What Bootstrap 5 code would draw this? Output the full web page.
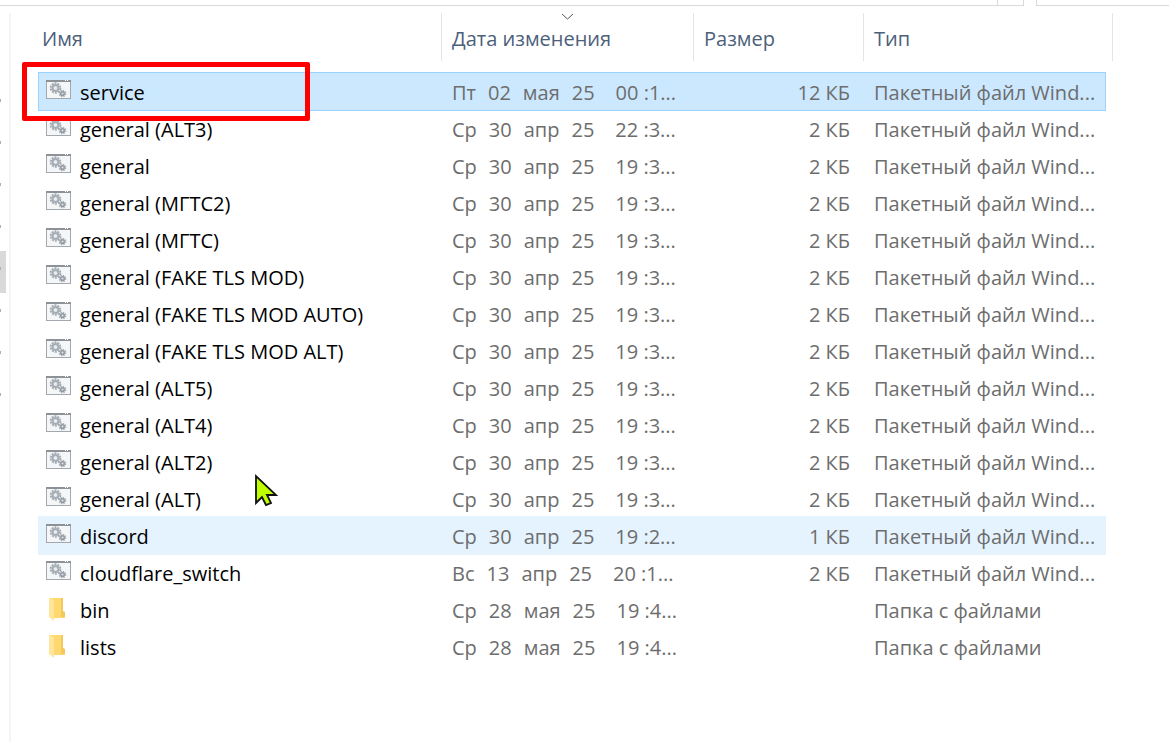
<!DOCTYPE html>
<html lang="ru">
<head>
<meta charset="utf-8">
<meta name="viewport" content="width=device-width, initial-scale=1">
<title>Проводник</title>
<link href="https://cdn.jsdelivr.net/npm/bootstrap@5.3.0/dist/css/bootstrap.min.css" rel="stylesheet">
<script src="https://cdn.jsdelivr.net/npm/bootstrap@5.3.0/dist/js/bootstrap.bundle.min.js"></script>
<style>
body{font-family:"Open Sans","Noto Sans",sans-serif;font-size:20px;line-height:28px;color:#000;background:#fff}
.topbar{height:6px;gap:12px;margin-bottom:7px}
.topbar div{border-bottom:1px solid #d9d9d9}
.address{border-right:1px solid #d9d9d9}
.refresh{width:26px;margin-left:-12px;border-right:1px solid #d9d9d9}
.search{width:133px;border-left:1px solid #d9d9d9}
.tree{width:11px;padding-top:70px;border-right:2px solid #f5f5f5}
.tree li{width:6px;height:42px;padding-bottom:8px}
.tree li::before{content:"";width:1px;height:3px;background:#b0b0b0}
.tree .current{background:#d9d9d9}
.files{padding:0 64px 0 28px}
.filelist{table-layout:fixed;border-collapse:separate;border-spacing:0}
.filelist th,.filelist td{padding:0 0 0 10px;white-space:nowrap}
.filelist th{position:relative;height:60px;padding-bottom:9px;font-weight:400;vertical-align:middle}
.filelist th::after{content:"";position:absolute;top:0;right:0;width:1px;height:48px;background:#e5e5e5}
.filelist th:last-child::after{right:-8px}
.filelist th:first-child{padding-left:3px}
.filelist td:first-child{padding-left:7px}
.filelist .sizecol{padding-right:14px}
.filelist td{height:37px;padding-top:2px;color:#6d6d6d}
.filelist .fname{color:#000}
.sorter{border:0;padding:0;background:none;color:#4c607a}
.sortmark{position:absolute;top:0;left:50%;margin-left:-7px}
.c-date{width:252px}.c-size{width:170px}.c-type{width:241px}
.chosen{position:relative;background:#cce8ff;box-shadow:0 0 0 1px #99d1ff}
.hovered{background:#e5f3ff;box-shadow:0 0 0 1px #e5f3ff}
.stamp{gap:12px}
.stamp .clock{margin-left:9px}
.highlight{position:absolute;z-index:2;left:-17px;top:-11px;width:288px;height:59px;border:5px solid #f00;border-radius:2px;pointer-events:none}
.pointer{position:absolute;left:254px;top:473px;z-index:3}
</style>
</head>
<body>
<svg class="d-none" aria-hidden="true">
<symbol id="bat" viewBox="0 1 26 26">
<rect x=".5" y="1.5" width="24" height="18" fill="#f5f6f7" stroke="#a3a8ae"/>
<path d="M0 2h25" stroke="#8d9298" stroke-width="2"/><path d="M19 1.5h1m1 0h1" stroke="#fff"/>
<g fill="none" stroke="#a5adb5">
<circle cx="9.500" cy="9" r="4.800" stroke-width="2" stroke-dasharray="2 1"/>
<circle cx="9.500" cy="9" r="3" stroke-width="2" fill="#d5dbe0"/>
<circle cx="16.500" cy="14.500" r="3.100" stroke-width="1.500" stroke-dasharray="1.500 .9"/>
<circle cx="16.500" cy="14.500" r="1.800" stroke="#8f979f" stroke-width="1.500" fill="#e4e8eb"/>
</g>
<circle cx="9.500" cy="9" r="1.500" fill="#eceff1"/>
</symbol>
<symbol id="folder" viewBox="0 1 26 26">
<path d="M4 1h13v13l2 1v6H8z" fill="#ffd970"/>
<path d="M15 1h2v13l2 1v5h-4z" fill="#f3c95d"/>
<path d="M3 1l5 2v21l-5-4z" fill="#ffe69b"/>
</symbol>
</svg>
<div class="d-flex flex-column min-vh-100 position-relative">
<header class="topbar d-flex">
<div class="address flex-grow-1"></div><div class="refresh"></div><div class="search"></div>
</header>
<div class="d-flex flex-grow-1">
<ul class="tree list-unstyled flex-shrink-0 mb-0">
<li class="d-flex align-items-center"></li><li class="d-flex align-items-center"></li><li class="d-flex align-items-center"></li><li class="d-flex align-items-center"></li><li class="d-flex align-items-center current"></li><li class="d-flex align-items-center"></li><li class="d-flex align-items-center"></li><li class="d-flex align-items-center"></li>
</ul>
<main class="files flex-grow-1">
<table class="filelist w-100">
<colgroup><col><col class="c-date"><col class="c-size"><col class="c-type"></colgroup>
<thead><tr>
<th scope="col"><button class="sorter" type="button">Имя</button></th>
<th scope="col" aria-sort="descending"><svg class="sortmark" width="13" height="8" viewBox="0 0 13 8" fill="none" stroke="#555"><path d="M1 1l5.500 5L12 1"/></svg><button class="sorter" type="button">Дата изменения</button></th>
<th scope="col"><button class="sorter" type="button">Размер</button></th>
<th scope="col"><button class="sorter" type="button">Тип</button></th>
</tr></thead>
<tbody id="rows"></tbody>
</table>
</main>
</div>
<svg class="pointer" width="25" height="36" viewBox="0 0 25 36"><path d="M2 3v27l6-6 4 8 5-2-4-8h9z" fill="#bfff00" stroke="#111" stroke-width="1.800"/></svg>
</div>
<script>
const bat = 'Пакетный файл Wind...', dir = 'Папка с файлами';
const files = [
['service','Пт 02 мая 25','00 :1...','12 КБ','chosen'],
['general (ALT3)','Ср 30 апр 25','22 :3...','2 КБ'],
['general','Ср 30 апр 25','19 :3...','2 КБ'],
['general (МГТС2)','Ср 30 апр 25','19 :3...','2 КБ'],
['general (МГТС)','Ср 30 апр 25','19 :3...','2 КБ'],
['general (FAKE TLS MOD)','Ср 30 апр 25','19 :3...','2 КБ'],
['general (FAKE TLS MOD AUTO)','Ср 30 апр 25','19 :3...','2 КБ'],
['general (FAKE TLS MOD ALT)','Ср 30 апр 25','19 :3...','2 КБ'],
['general (ALT5)','Ср 30 апр 25','19 :3...','2 КБ'],
['general (ALT4)','Ср 30 апр 25','19 :3...','2 КБ'],
['general (ALT2)','Ср 30 апр 25','19 :3...','2 КБ'],
['general (ALT)','Ср 30 апр 25','19 :3...','2 КБ'],
['discord','Ср 30 апр 25','19 :2...','1 КБ','hovered'],
['cloudflare_switch','Вс 13 апр 25','20 :1...','2 КБ'],
['bin','Ср 28 мая 25','19 :4...',''],
['lists','Ср 28 мая 25','19 :4...','']
];
document.getElementById('rows').innerHTML = files.map(([name, date, time, size, state]) => `
<tr class="${state || ''}">
<td class="fname"><div class="d-flex align-items-center gap-2"><svg width="26" height="26"><use href="#${size ? 'bat' : 'folder'}"/></svg><span>${name}</span></div>${state === 'chosen' ? '<div class="highlight"></div>' : ''}</td>
<td><div class="d-flex stamp">${date.split(' ').map(p => `<span>${p}</span>`).join('')}<span class="clock">${time}</span></div></td>
<td class="sizecol text-end">${size}</td>
<td>${size ? bat : dir}</td>
</tr>`).join('');
</script>
</body>
</html>
